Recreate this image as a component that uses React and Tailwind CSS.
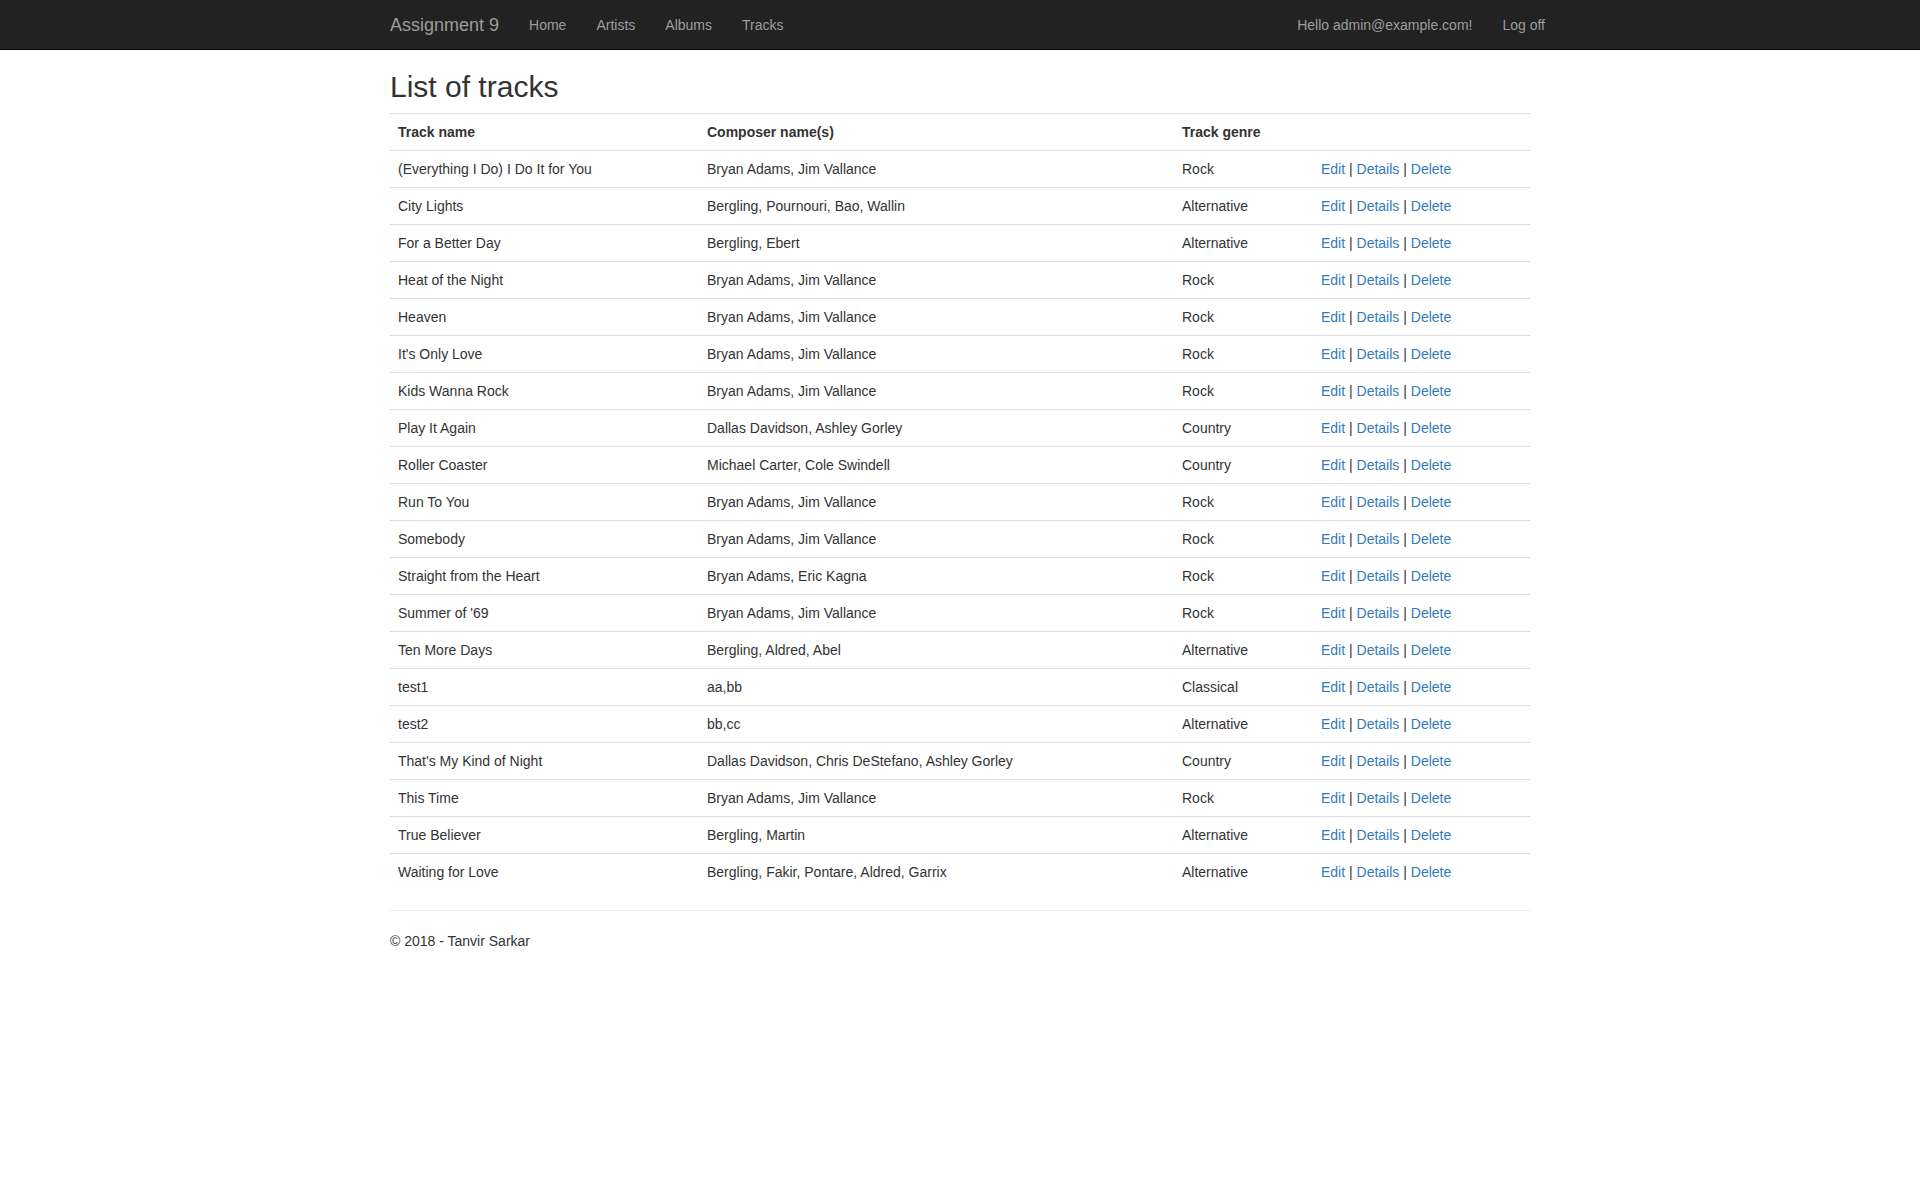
import React from "react";

const tracks = [
  ["(Everything I Do) I Do It for You", "Bryan Adams, Jim Vallance", "Rock"],
  ["City Lights", "Bergling, Pournouri, Bao, Wallin", "Alternative"],
  ["For a Better Day", "Bergling, Ebert", "Alternative"],
  ["Heat of the Night", "Bryan Adams, Jim Vallance", "Rock"],
  ["Heaven", "Bryan Adams, Jim Vallance", "Rock"],
  ["It's Only Love", "Bryan Adams, Jim Vallance", "Rock"],
  ["Kids Wanna Rock", "Bryan Adams, Jim Vallance", "Rock"],
  ["Play It Again", "Dallas Davidson, Ashley Gorley", "Country"],
  ["Roller Coaster", "Michael Carter, Cole Swindell", "Country"],
  ["Run To You", "Bryan Adams, Jim Vallance", "Rock"],
  ["Somebody", "Bryan Adams, Jim Vallance", "Rock"],
  ["Straight from the Heart", "Bryan Adams, Eric Kagna", "Rock"],
  ["Summer of '69", "Bryan Adams, Jim Vallance", "Rock"],
  ["Ten More Days", "Bergling, Aldred, Abel", "Alternative"],
  ["test1", "aa,bb", "Classical"],
  ["test2", "bb,cc", "Alternative"],
  ["That's My Kind of Night", "Dallas Davidson, Chris DeStefano, Ashley Gorley", "Country"],
  ["This Time", "Bryan Adams, Jim Vallance", "Rock"],
  ["True Believer", "Bergling, Martin", "Alternative"],
  ["Waiting for Love", "Bergling, Fakir, Pontare, Aldred, Garrix", "Alternative"],
];

function NavLink({ children }) {
  return (
    <a href="#" className="block px-[15px] py-[15px] leading-5 text-[14px] text-[#9d9d9d] hover:text-white">
      {children}
    </a>
  );
}

export default function App() {
  const cell = "px-2 py-2 leading-5 border-t border-[#ddd] align-top text-left";
  return (
    <div className="min-h-screen bg-white text-[#333] text-[14px] leading-5" style={{ fontFamily: '"Liberation Sans", Arial, sans-serif' }}>
      <div className="h-[50px] bg-[#222] border-b border-[#080808]">
        <div className="w-[1170px] mx-auto px-[15px] flex justify-between">
          <div className="flex -ml-[15px]">
            <a href="#" className="block h-[50px] px-[15px] py-[15px] text-[18px] leading-5 text-[#9d9d9d]">Assignment 9</a>
            <NavLink>Home</NavLink>
            <NavLink>Artists</NavLink>
            <NavLink>Albums</NavLink>
            <NavLink>Tracks</NavLink>
          </div>
          <div className="flex -mr-[30px]">
            <NavLink>Hello admin@example.com!</NavLink>
            <NavLink>Log off</NavLink>
          </div>
        </div>
      </div>

      <div className="w-[1170px] mx-auto px-[15px]">
        <h2 className="mt-5 mb-[10px] text-[30px] leading-[33px] font-medium text-[#333]">List of tracks</h2>
        <table className="w-full mb-5 border-collapse">
          <colgroup>
            <col className="w-[309px]" />
            <col className="w-[475px]" />
            <col className="w-[139px]" />
            <col className="w-[217px]" />
          </colgroup>
          <tbody>
            <tr>
              <th className={cell + " font-bold align-bottom"}>Track name</th>
              <th className={cell + " font-bold align-bottom"}>Composer name(s)</th>
              <th className={cell + " font-bold align-bottom"}>Track genre</th>
              <th className={cell}></th>
            </tr>
            {tracks.map(([name, composer, genre]) => (
              <tr key={name}>
                <td className={cell}>{name}</td>
                <td className={cell}>{composer}</td>
                <td className={cell}>{genre}</td>
                <td className={cell}>
                  <a href="#" className="text-[#337ab7]">Edit</a> |{" "}
                  <a href="#" className="text-[#337ab7]">Details</a> |{" "}
                  <a href="#" className="text-[#337ab7]">Delete</a>
                </td>
              </tr>
            ))}
          </tbody>
        </table>
        <hr className="mt-5 mb-5 border-0 border-t border-[#eee]" />
        <footer>
          <p className="mb-[10px]">© 2018 - Tanvir Sarkar</p>
        </footer>
      </div>
    </div>
  );
}
